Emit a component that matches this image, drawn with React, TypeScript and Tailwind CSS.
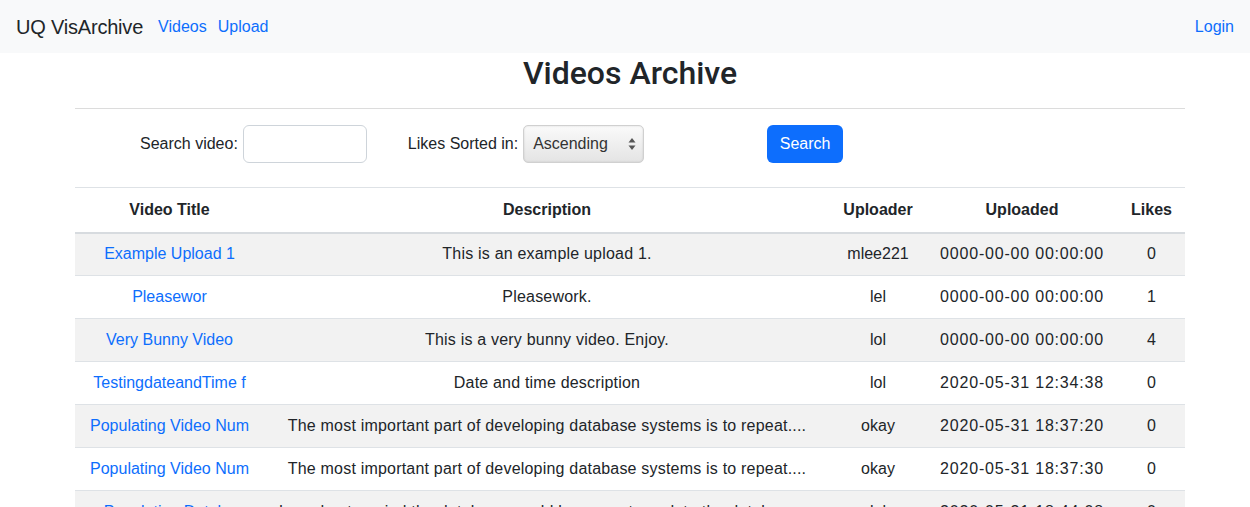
import React from "react";

const rows = [
  { t: "Example Upload 1", d: "This is an example upload 1.", u: "mlee221", at: "0000-00-00 00:00:00", l: "0" },
  { t: "Pleasewor", d: "Pleasework.", u: "lel", at: "0000-00-00 00:00:00", l: "1" },
  { t: "Very Bunny Video", d: "This is a very bunny video. Enjoy.", u: "lol", at: "0000-00-00 00:00:00", l: "4" },
  { t: "TestingdateandTime f", d: "Date and time description", u: "lol", at: "2020-05-31 12:34:38", l: "0" },
  { t: "Populating Video Num", d: "The most important part of developing database systems is to repeat....", u: "okay", at: "2020-05-31 18:37:20", l: "0" },
  { t: "Populating Video Num", d: "The most important part of developing database systems is to repeat....", u: "okay", at: "2020-05-31 18:37:30", l: "0" },
  { t: "Populating Databa", d: "I need not remind the database would be a way to update the database....", u: "lol", at: "2020-05-31 18:44:08", l: "0" },
];

export default function App() {
  return (
    <div className="h-[507px] overflow-hidden bg-white text-[16px] text-[#212529]" style={{ fontFamily: '"Liberation Sans", Arial, sans-serif' }}>
      <nav className="flex h-[53px] items-center bg-[#f8f9fa] px-4">
        <span className="text-[20px] leading-[30px] tracking-[-0.2px] text-[#212529]">UQ VisArchive</span>
        <div className="ml-[15px] flex gap-[11px] text-[#0d6efd]">
          <span>Videos</span>
          <span>Upload</span>
        </div>
        <span className="ml-auto text-[#0d6efd]">Login</span>
      </nav>
      <div className="ml-[75px] w-[1110px]">
        <h2 className="pt-[2px] text-center text-[32px] leading-[37px] text-[#212529]" style={{ fontFamily: 'Roboto, "Liberation Sans", sans-serif', fontWeight: 500 }}>
          Videos Archive
        </h2>
        <hr className="mt-4 border-0 border-t border-[#dcdcdc]" />
        <div className="flex h-[78px] items-start pl-[65px] pt-4">
          <div className="flex items-center">
            <span className="mr-[5px]">Search video:</span>
            <div className="h-[38px] w-[124px] rounded-[6px] border border-[#ced4da] bg-white" />
          </div>
          <div className="ml-[41px] flex items-center">
            <span className="mr-[5px]">Likes Sorted in:</span>
            <div className="flex h-[38px] w-[121px] items-center justify-between rounded-[5px] border border-[#d0d0d0] bg-gradient-to-b from-[#fafafa] to-[#e4e4e4] pl-[9px] pr-[7px] text-[#333] shadow-[inset_0_0_2px_rgba(0,0,0,0.15)]">
              <span>Ascending</span>
              <svg width="8" height="14" viewBox="0 0 8 14">
                <path d="M4 1 L7.5 5.5 L0.5 5.5 Z" fill="#555" />
                <path d="M4 13 L7.5 8.5 L0.5 8.5 Z" fill="#555" />
              </svg>
            </div>
          </div>
          <button className="ml-[123px] h-[38px] w-[76px] rounded-[6px] bg-[#0d6efd] text-white">Search</button>
        </div>
        <table className="w-full table-fixed border-collapse">
          <colgroup>
            <col className="w-[189px]" />
            <col className="w-[566px]" />
            <col className="w-[96px]" />
            <col className="w-[192px]" />
            <col className="w-[67px]" />
          </colgroup>
          <thead>
            <tr className="border-t border-[#dee2e6]">
              {["Video Title", "Description", "Uploader", "Uploaded", "Likes"].map((h) => (
                <th key={h} className="h-[45px] border-b-2 border-[#d7dbdf] p-0 text-center font-bold leading-6">
                  {h}
                </th>
              ))}
            </tr>
          </thead>
          <tbody>
            {rows.map((r, i) => (
              <tr key={i} className={i % 2 === 0 ? "bg-[#f2f2f2]" : "bg-white"}>
                <td className="h-[43px] border-b border-[#dee2e6] p-0 text-center leading-6 text-[#0d6efd]">{r.t}</td>
                <td className="border-b border-[#dee2e6] p-0 text-center leading-6 tracking-[0.2px]">{r.d}</td>
                <td className="border-b border-[#dee2e6] p-0 text-center leading-6">{r.u}</td>
                <td className="border-b border-[#dee2e6] p-0 text-center leading-6 tracking-[0.8px]">{r.at}</td>
                <td className="border-b border-[#dee2e6] p-0 text-center leading-6">{r.l}</td>
              </tr>
            ))}
          </tbody>
        </table>
      </div>
    </div>
  );
}
